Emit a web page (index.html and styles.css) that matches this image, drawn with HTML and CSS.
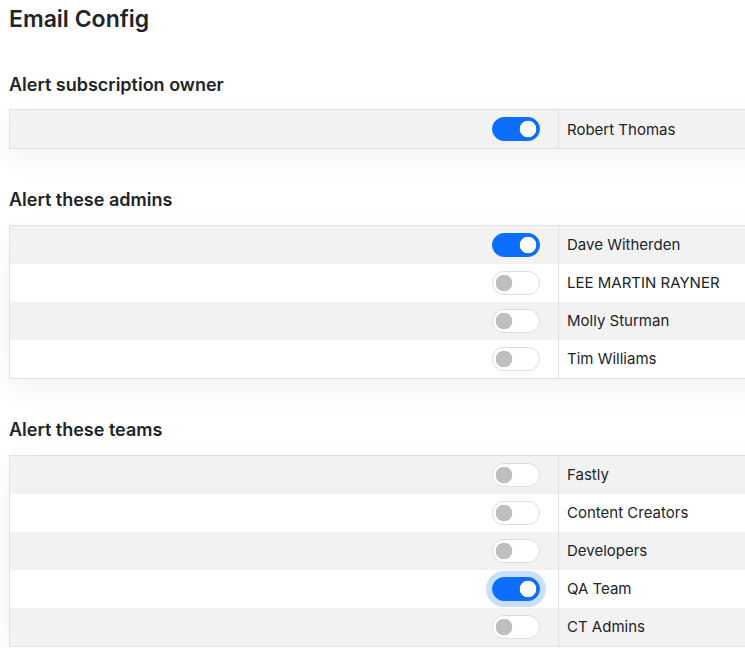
FILE: index.html
```html
<!DOCTYPE html>
<html>

<head>
    <meta charset="UTF-8">
    <title>Email Config</title>
    <link rel="stylesheet" href="styles.css">
</head>

<body>
    <div class="page">
        <h1 class="page-title">Email Config</h1>

        <section class="alert-group">
            <h2 class="group-title">Alert subscription owner</h2>
            <table class="alert-table">
                <tbody>
                    <tr>
                        <td class="toggle-cell"><input type="checkbox" class="switch" checked></td>
                        <td>Robert Thomas</td>
                    </tr>
                </tbody>
            </table>
        </section>

        <section class="alert-group">
            <h2 class="group-title">Alert these admins</h2>
            <table class="alert-table">
                <tbody>
                    <tr>
                        <td class="toggle-cell"><input type="checkbox" class="switch" checked></td>
                        <td>Dave Witherden</td>
                    </tr>
                    <tr>
                        <td class="toggle-cell"><input type="checkbox" class="switch"></td>
                        <td>LEE MARTIN RAYNER</td>
                    </tr>
                    <tr>
                        <td class="toggle-cell"><input type="checkbox" class="switch"></td>
                        <td>Molly Sturman</td>
                    </tr>
                    <tr>
                        <td class="toggle-cell"><input type="checkbox" class="switch"></td>
                        <td>Tim Williams</td>
                    </tr>
                </tbody>
            </table>
        </section>

        <section class="alert-group">
            <h2 class="group-title">Alert these teams</h2>
            <table class="alert-table">
                <tbody>
                    <tr>
                        <td class="toggle-cell"><input type="checkbox" class="switch"></td>
                        <td>Fastly</td>
                    </tr>
                    <tr>
                        <td class="toggle-cell"><input type="checkbox" class="switch"></td>
                        <td>Content Creators</td>
                    </tr>
                    <tr>
                        <td class="toggle-cell"><input type="checkbox" class="switch"></td>
                        <td>Developers</td>
                    </tr>
                    <tr>
                        <td class="toggle-cell"><input type="checkbox" class="switch is-focused" checked></td>
                        <td>QA Team</td>
                    </tr>
                    <tr>
                        <td class="toggle-cell"><input type="checkbox" class="switch"></td>
                        <td>CT Admins</td>
                    </tr>
                </tbody>
            </table>
        </section>
    </div>
</body>

</html>
```

FILE: styles.css
```css
html,
body {
    overflow-x: hidden;
}

body {
    margin: 0;
    font-family: Inter, "Noto Sans", sans-serif;
    color: #212529;
    background-color: #fff;
}

.page {
    padding: 5px 0 0 9px;
}

.page-title {
    font-size: 23px;
    font-weight: 600;
    line-height: 1.25;
    margin: 0;
}

.alert-group {
    margin-top: 40px;
}

.group-title {
    font-size: 18px;
    font-weight: 600;
    line-height: 1.2;
    margin: 0 0 14px;
}

/* the table runs past the right edge of the window */
.alert-table {
    width: 900px;
    border-collapse: collapse;
    table-layout: fixed;
    border: 1px solid #dee2e6;
    box-shadow: 0 10px 28px rgba(0, 0, 0, 0.05);
}

.alert-table td {
    height: 38px;
    padding: 0 8px;
    vertical-align: middle;
    font-size: 15px;
    background-color: #fff;
}

.alert-table tr:nth-child(odd) td {
    background-color: #f2f2f2;
}

.alert-table td.toggle-cell {
    width: 522px;
    text-align: right;
    border-right: 1px solid #dee2e6;
    padding-right: 18px;
}

.switch {
    appearance: none;
    -webkit-appearance: none;
    box-sizing: border-box;
    width: 48px;
    height: 24px;
    margin: 0;
    border: 1px solid #dadde2;
    border-radius: 12px;
    background-color: #fff;
    background-image: radial-gradient(circle at 11px 50%, #bfbfbf 8px, transparent 8.6px);
    vertical-align: middle;
    cursor: pointer;
}

.switch:checked {
    border-color: #0d6efd;
    background-color: #0d6efd;
    background-image: radial-gradient(circle at calc(100% - 11px) 50%, #fff 8px, transparent 8.6px);
}

.switch.is-focused {
    box-shadow: 0 0 0 6px rgba(13, 110, 253, 0.22);
}
```
